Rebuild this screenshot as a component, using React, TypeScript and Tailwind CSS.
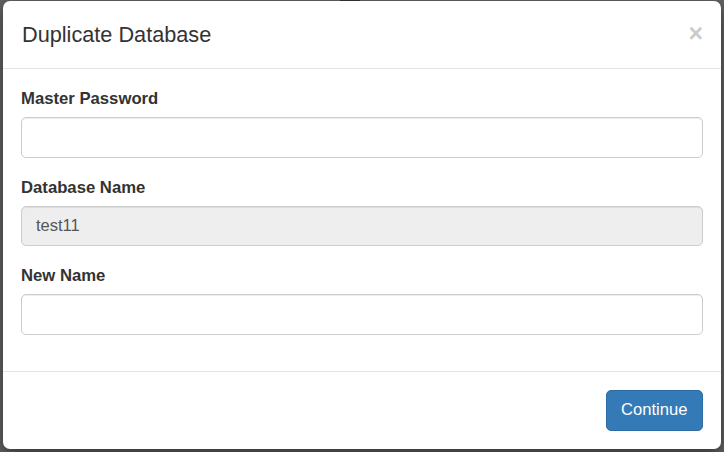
import React, { useState } from 'react';

const fieldLabel = 'block text-[16.7px] leading-[24px] font-bold text-[#333] mb-[6px]';
const fieldInput =
    'block w-full h-[40.5px] px-[14px] border border-[#ccc] rounded-[5px] text-[16.5px] text-[#555] outline-none shadow-[inset_0_1px_1px_rgba(0,0,0,0.075)] focus:border-[#66afe9]';

const App: React.FC = () => {
    const [password, setPassword] = useState('');
    const [newName, setNewName] = useState('');

    return (
        <div className="relative w-full h-[452px] bg-[#636363] pt-[1px] pl-[3px] overflow-hidden font-['Liberation_Sans',Arial,sans-serif]">
            {/* bit of the page peeking out above the dialog */}
            <div className="absolute top-0 left-[340px] w-[20px] h-[1px] bg-[#2f2f2f]" />

            <div className="w-[718px] h-[448px] bg-white rounded-[7px] shadow-[0_5px_15px_rgba(0,0,0,0.5)] flex flex-col">
                <div className="flex items-center justify-between pl-[19px] pr-[18px] pt-[19px] pb-[18px] border-b border-[#e5e5e5]">
                    <h4 className="text-[21.7px] leading-[30px] text-[#333]">Duplicate Database</h4>
                    <button
                        type="button"
                        className="text-[25px] leading-none font-bold text-black opacity-20 -mt-[4px]"
                    >
                        ×
                    </button>
                </div>

                <div className="px-[18px] pt-[18px] pb-[18px]">
                    <div className="mb-[18px]">
                        <label className={fieldLabel}>Master Password</label>
                        <input
                            type="password"
                            className={fieldInput}
                            value={password}
                            onChange={e => setPassword(e.target.value)}
                        />
                    </div>
                    <div className="mb-[18px]">
                        <label className={fieldLabel}>Database Name</label>
                        <input type="text" className={`${fieldInput} bg-[#eee]`} value="test11" disabled readOnly />
                    </div>
                    <div className="mb-[18px]">
                        <label className={fieldLabel}>New Name</label>
                        <input
                            type="text"
                            className={fieldInput}
                            value={newName}
                            onChange={e => setNewName(e.target.value)}
                        />
                    </div>
                </div>

                <div className="flex justify-end px-[18px] pt-[18px] border-t border-[#e5e5e5]">
                    <button
                        type="button"
                        className="h-[41px] px-[14.5px] bg-[#337ab7] border border-[#2e6da4] rounded-[5px] text-white text-[16.6px]"
                    >
                        Continue
                    </button>
                </div>
            </div>
        </div>
    );
};

export default App;
